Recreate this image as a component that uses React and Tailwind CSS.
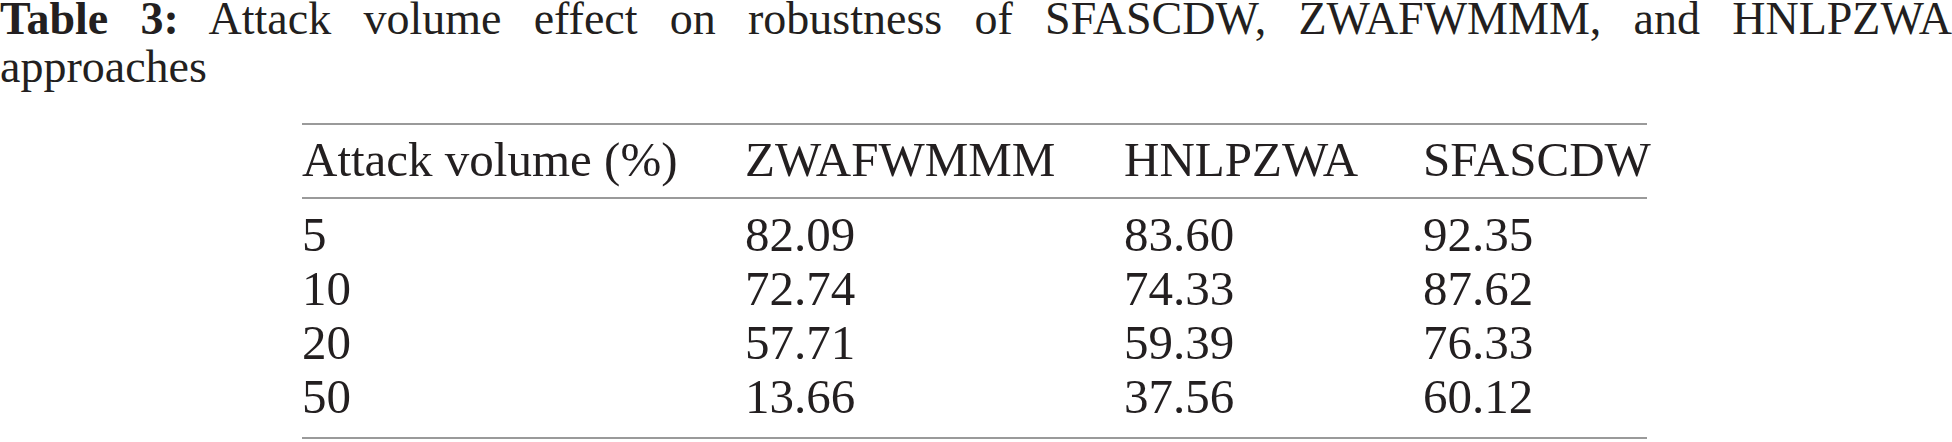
import React from "react";

const columns = ["Attack volume (%)", "ZWAFWMMM", "HNLPZWA", "SFASCDW"];

const rows = [
  ["5", "82.09", "83.60", "92.35"],
  ["10", "72.74", "74.33", "87.62"],
  ["20", "57.71", "59.39", "76.33"],
  ["50", "13.66", "37.56", "60.12"],
];

const grid = "grid grid-cols-[443px_379px_299px_1fr]";

export default function App() {
  return (
    <div className="w-[1952px] h-[442px] overflow-hidden bg-white text-[#231f20] font-['Liberation_Serif','Times_New_Roman',serif]">
      {/* Caption */}
      <div className="text-[46px] leading-[38px]">
        <div className="text-justify [text-align-last:justify]">
          <span className="font-bold">Table 3:</span> Attack volume effect on robustness of SFASCDW, ZWAFWMMM, and HNLPZWA
        </div>
        <div className="mt-[10px]">approaches</div>
      </div>

      {/* Table */}
      <div className="ml-[302px] w-[1345px] mt-[37px] text-[49px] leading-[54px]">
        <div className="h-[2px] bg-[#9a9a9a]" />
        <div className={`${grid} pt-[8px] pb-[10px]`}>
          {columns.map((c) => (
            <div key={c} className="whitespace-nowrap">
              {c}
            </div>
          ))}
        </div>
        <div className="h-[2px] bg-[#9a9a9a]" />
        <div className="pt-[9px] pb-[13px]">
          {rows.map((r) => (
            <div key={r[0]} className={grid}>
              {r.map((v, i) => (
                <div key={i}>{v}</div>
              ))}
            </div>
          ))}
        </div>
        <div className="h-[2px] bg-[#9a9a9a]" />
      </div>
    </div>
  );
}
